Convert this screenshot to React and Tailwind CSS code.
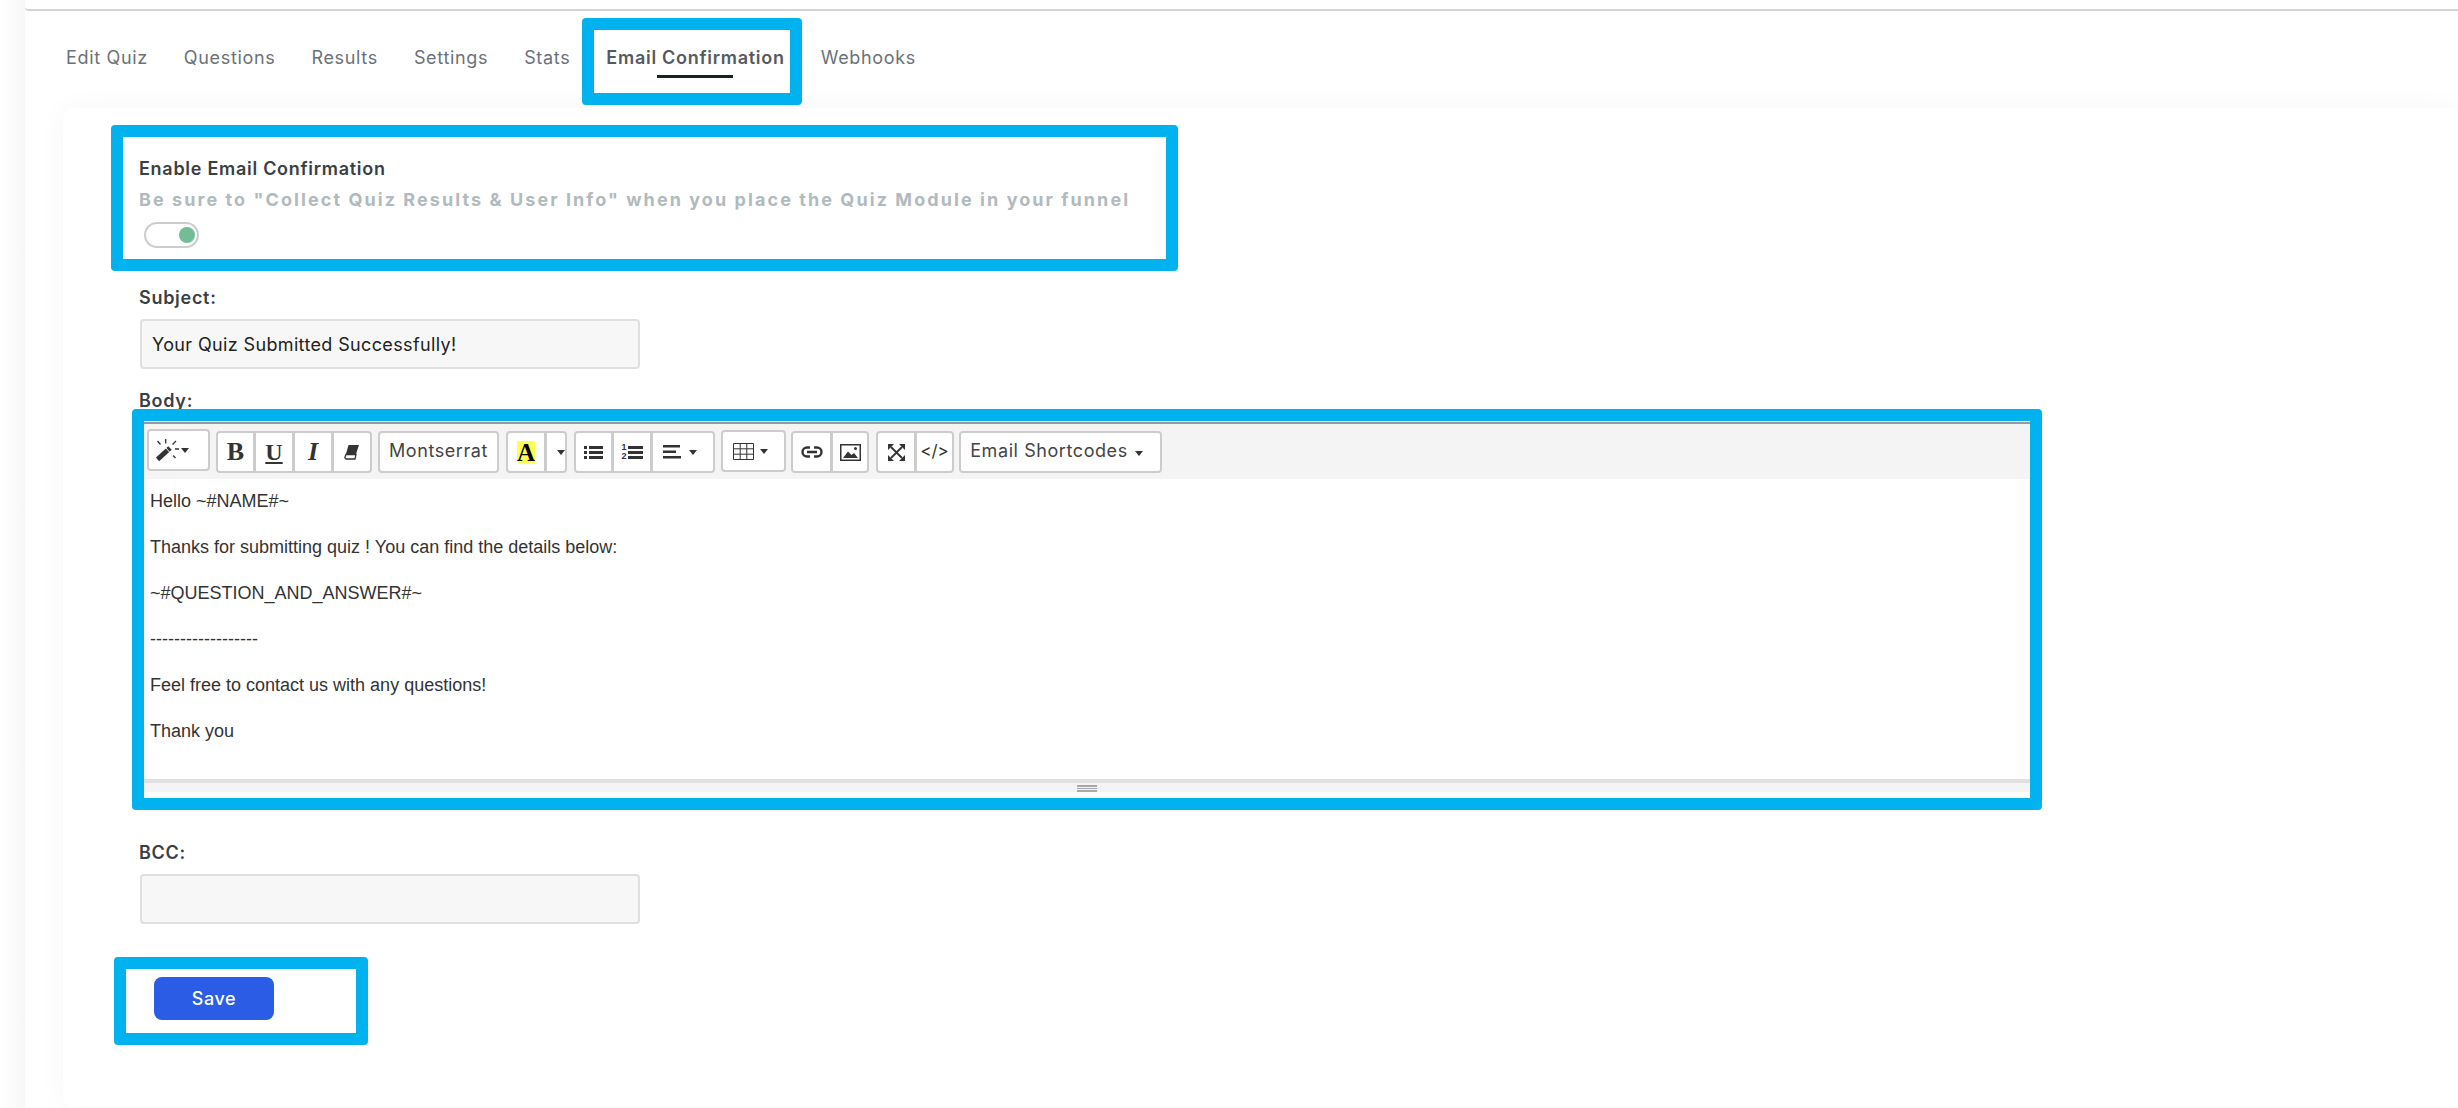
import React from "react";

const TABS = ["Edit Quiz", "Questions", "Results", "Settings", "Stats", "Email Confirmation", "Webhooks"];

const BODY_LINES = [
    "Hello ~#NAME#~",
    "Thanks for submitting quiz ! You can find the details below:",
    "~#QUESTION_AND_ANSWER#~",
    "------------------",
    "Feel free to contact us with any questions!",
    "Thank you",
];

function Caret({ className = "" }) {
    return <span className={`inline-block border-x-[4px] border-t-[5px] border-x-transparent border-t-[#333] ${className}`} />;
}

function Highlight({ className }) {
    return <div className={`pointer-events-none absolute rounded-[4px] border-[12px] border-[#00b2ed] ${className}`} />;
}

function Group({ className = "", children }) {
    return <div className={`flex h-[42px] rounded-[4px] border-2 border-[#ccc] bg-white text-[#333] ${className}`}>{children}</div>;
}

function Cell({ className = "", children }) {
    return <div className={`flex items-center justify-center border-l-[3px] border-[#ccc] first:border-l-0 ${className}`}>{children}</div>;
}

function WandIcon() {
    return (
        <svg width="24" height="24" viewBox="0 0 24 24" fill="none" stroke="#333">
            <path d="M1.500 21.500 L14 10" strokeWidth="5" />
            <path d="M9.500 9.500 L13.500 14" strokeWidth="1" stroke="#fff" />
            <path d="M9.700 1v4.500M1.500 3l3 3.500M20 3l-3.500 3.500M19 11h4M17 17.500l2.500 2.500" strokeWidth="1.300" />
        </svg>
    );
}

function EraserIcon() {
    return (
        <svg width="16" height="16" viewBox="0 0 16 16">
            <path d="M4.500 1H15L12 10H2Z" fill="#333" />
            <path d="M2 10.500H12L11 15H2.500A1.500 1.500 0 0 1 1 13Z" fill="#fff" stroke="#333" strokeWidth="1.300" />
        </svg>
    );
}

function ListIcon() {
    return (
        <svg width="20" height="15" viewBox="0 0 20 15" fill="#333">
            <rect x="0" y="1" width="3" height="3" />
            <rect x="0" y="6" width="3" height="3" />
            <rect x="0" y="11" width="3" height="3" />
            <rect x="5" y="1" width="14" height="3" />
            <rect x="5" y="6" width="14" height="3" />
            <rect x="5" y="11" width="14" height="3" />
        </svg>
    );
}

function OrderedListIcon() {
    return (
        <div className="flex items-center gap-[1px]">
            <div className="flex flex-col font-['Liberation_Sans',sans-serif] text-[9px] leading-[9px] font-bold text-[#333]">
                <span>1</span>
                <span>2</span>
            </div>
            <svg width="15" height="15" viewBox="0 0 15 15" fill="#333">
                <rect x="0" y="1" width="15" height="3" />
                <rect x="0" y="6" width="15" height="3" />
                <rect x="0" y="11" width="15" height="3" />
            </svg>
        </div>
    );
}

function AlignIcon() {
    return (
        <svg width="18" height="14" viewBox="0 0 18 14" fill="#333">
            <rect x="0" y="0" width="17" height="2.500" />
            <rect x="0" y="5.500" width="13" height="2.500" />
            <rect x="0" y="11" width="18" height="2.500" />
        </svg>
    );
}

function TableIcon() {
    return (
        <svg width="21" height="17" viewBox="0 0 21 17" fill="none" stroke="#333" strokeWidth="1">
            <path d="M.500.500h20v16h-20zM.500 5.800h20M.500 11.200h20M7.200.500v16M13.800.500v16" />
        </svg>
    );
}

function LinkIcon() {
    return (
        <svg width="22" height="12" viewBox="0 0 22 12" fill="none" stroke="#333" strokeWidth="2.400">
            <path d="M9 1.500H6a4.500 4.500 0 0 0 0 9h3M13 1.500h3a4.500 4.500 0 0 1 0 9h-3M6 6h10" />
        </svg>
    );
}

function PictureIcon() {
    return (
        <svg width="21" height="17" viewBox="0 0 21 17">
            <rect x=".750" y=".750" width="19.500" height="15.500" fill="none" stroke="#333" strokeWidth="1.500" />
            <path d="M3 14 L8 7.500 L11.500 11 L14 9 L18 14Z" fill="#333" />
            <circle cx="15.500" cy="4.500" r="1.500" fill="#333" />
        </svg>
    );
}

function ExpandIcon() {
    return (
        <svg width="17" height="17" viewBox="0 0 17 17" fill="#333">
            <path d="M3 3 L14 14 M14 3 L3 14" stroke="#333" strokeWidth="1.800" />
            <path d="M0 0h6L0 6ZM17 0h-6l6 6ZM0 17h6L0 11ZM17 17h-6l6-6Z" />
        </svg>
    );
}

function Toolbar() {
    const montserrat = "font-['Inter',sans-serif] text-[18px] leading-[22px] pb-[2px] tracking-[0.032em] text-[#444]";
    const serif = "font-['Liberation_Serif',serif]";
    return (
        <div className="flex h-[57px] flex-none items-start gap-[6px] border-t-2 border-[#999] bg-[#f4f4f4] pt-[7px] pl-[3px]">
            <Group className="-mt-[2px] w-[63px] items-center justify-center gap-[1px] pr-[12px]">
                <WandIcon />
                <Caret />
            </Group>
            <Group className="w-[156px]">
                <Cell className="w-[35px]"><span className={`${serif} text-[26px] leading-none font-bold`}>B</span></Cell>
                <Cell className="w-[39px]"><span className={`${serif} text-[24px] leading-none font-bold underline underline-offset-2`}>U</span></Cell>
                <Cell className="w-[39px]"><span className={`${serif} text-[26px] leading-none font-bold italic`}>I</span></Cell>
                <Cell className="w-[39px]"><EraserIcon /></Cell>
            </Group>
            <Group className={`w-[121px] items-center justify-center ${montserrat}`}>Montserrat</Group>
            <Group className="ml-[1px] w-[61px]">
                <Cell className="w-[36px]">
                    <span className={`${serif} flex h-[22px] w-[18px] items-center justify-center bg-[#ffff4d] text-[25px] leading-none font-bold text-black`}>A</span>
                </Cell>
                <Cell className="w-[21px] justify-end"><Caret /></Cell>
            </Group>
            <Group className="ml-[1px] w-[141px]">
                <Cell className="w-[35px]"><ListIcon /></Cell>
                <Cell className="w-[39px]"><OrderedListIcon /></Cell>
                <Cell className="w-[63px] gap-[8px] pr-[6px]"><AlignIcon /><Caret /></Cell>
            </Group>
            <Group className="-mt-[1px] w-[65px] items-center justify-center gap-[6px] pr-[6px]">
                <TableIcon />
                <Caret />
            </Group>
            <Group className="-ml-[1px] w-[78px]">
                <Cell className="w-[37px]"><LinkIcon /></Cell>
                <Cell className="w-[37px]"><PictureIcon /></Cell>
            </Group>
            <Group className="ml-[1px] w-[78px]">
                <Cell className="w-[36px]"><ExpandIcon /></Cell>
                <Cell className="w-[38px]"><span className="font-['Inter',sans-serif] text-[17px]">&lt;/&gt;</span></Cell>
            </Group>
            <Group className={`-ml-[1px] w-[203px] items-center justify-center gap-[7px] pr-[8px] ${montserrat}`}>
                Email Shortcodes
                <Caret className="mt-[5px]" />
            </Group>
        </div>
    );
}

export default function App() {
    const label = "-ml-[1px] text-[18px] leading-[24px] font-semibold tracking-[0.04em] text-[#3a3f45]";
    const field = "flex w-[500px] items-center rounded-[4px] border-2 border-[#e0e0e0] bg-[#f7f7f7] px-[10px] text-[18px] tracking-[0.02em] text-[#222]";

    return (
        <div className="flex h-[1108px] w-[2458px] overflow-hidden bg-white font-['Inter',sans-serif]">
            <div className="w-[25px] flex-none bg-gradient-to-r from-white to-[#f7f7f7]" />
            <div className="min-w-0 flex-1">
                <div className="h-[11px] rounded-bl-[4px] border-b-2 border-[#d3d3d3]" />

                {/* Tabs */}
                <nav className="flex h-[97px] gap-[36px] pt-[35px] pl-[41px] text-[18px] leading-[24px] tracking-[0.037em] text-[#6c7178]">
                    {TABS.map(tab =>
                        tab === "Email Confirmation" ? (
                            <div key={tab} className="relative h-[24px] font-semibold tracking-[0.04em] text-[#555a60]">
                                {tab}
                                <div className="absolute top-[29px] left-[51px] h-[3px] w-[76px] bg-[#12261e]" />
                                <Highlight className="-top-[28px] -right-[17px] -bottom-[35px] -left-[24px]" />
                            </div>
                        ) : (
                            <div key={tab} className="h-[24px]">{tab}</div>
                        )
                    )}
                </nav>

                {/* Card */}
                <div className="ml-[38px] h-[999px] rounded-l-[10px] bg-white pt-[49px] pl-[77px] shadow-[0_0_30px_rgba(0,0,0,0.035)]">
                    <div className="relative w-[1009px]">
                        <div className={label}>Enable Email Confirmation</div>
                        <div className="mt-[7px] -ml-[1px] text-[18px] leading-[24px] font-bold tracking-[0.115em] whitespace-nowrap text-[#b1babd]">
                            Be sure to "Collect Quiz Results &amp; User Info" when you place the Quiz Module in your funnel
                        </div>
                        <div className="mt-[10px] ml-[4px] flex h-[26px] w-[55px] items-center justify-end rounded-full border-2 border-[#ccc] bg-white pr-[2px]">
                            <div className="h-[16px] w-[16px] rounded-full bg-[#71bd97]" />
                        </div>
                        <Highlight className="-top-[32px] -right-[29px] -bottom-[23px] -left-[29px]" />
                    </div>

                    <div className={`mt-[38px] ${label}`}>Subject:</div>
                    <div className={`mt-[9px] h-[50px] ${field}`}>Your Quiz Submitted Successfully!</div>

                    <div className={`mt-[20px] ${label}`}>Body:</div>

                    {/* Editor */}
                    <div className="relative mt-[9px] ml-[4px] h-[370px] w-[1886px]">
                        <div className="flex h-full flex-col bg-white">
                            <Toolbar />
                            <div className="flex-1 pt-[9px] pl-[6px] font-['Liberation_Sans',sans-serif] text-[18px] leading-[26px] text-[#333]">
                                {BODY_LINES.map(line => (
                                    <p key={line} className="mb-[20px]">{line}</p>
                                ))}
                            </div>
                            <div className="flex h-[13px] flex-none flex-col items-center gap-[1px] border-t-4 border-[#e0e0e0] bg-[#f4f4f4] pt-[2px]">
                                <div className="h-[2px] w-[20px] bg-[#a9a9a9]" />
                                <div className="h-[2px] w-[20px] bg-[#a9a9a9]" />
                                <div className="h-[2px] w-[20px] bg-[#a9a9a9]" />
                            </div>
                        </div>
                        <Highlight className="-top-[13px] -right-[12px] -bottom-[18px] -left-[12px]" />
                    </div>

                    <div className={`mt-[49px] ${label}`}>BCC:</div>
                    <div className={`mt-[9px] h-[50px] ${field}`} />

                    <div className="relative mt-[53px] ml-[14px] w-[120px]">
                        <button className="flex h-[43px] w-[120px] items-center justify-center rounded-[8px] bg-[#2b5ce6] text-[18px] font-medium tracking-[0.033em] text-white">
                            Save
                        </button>
                        <Highlight className="-top-[20px] -right-[94px] -bottom-[25px] -left-[40px]" />
                    </div>
                </div>
            </div>
        </div>
    );
}
